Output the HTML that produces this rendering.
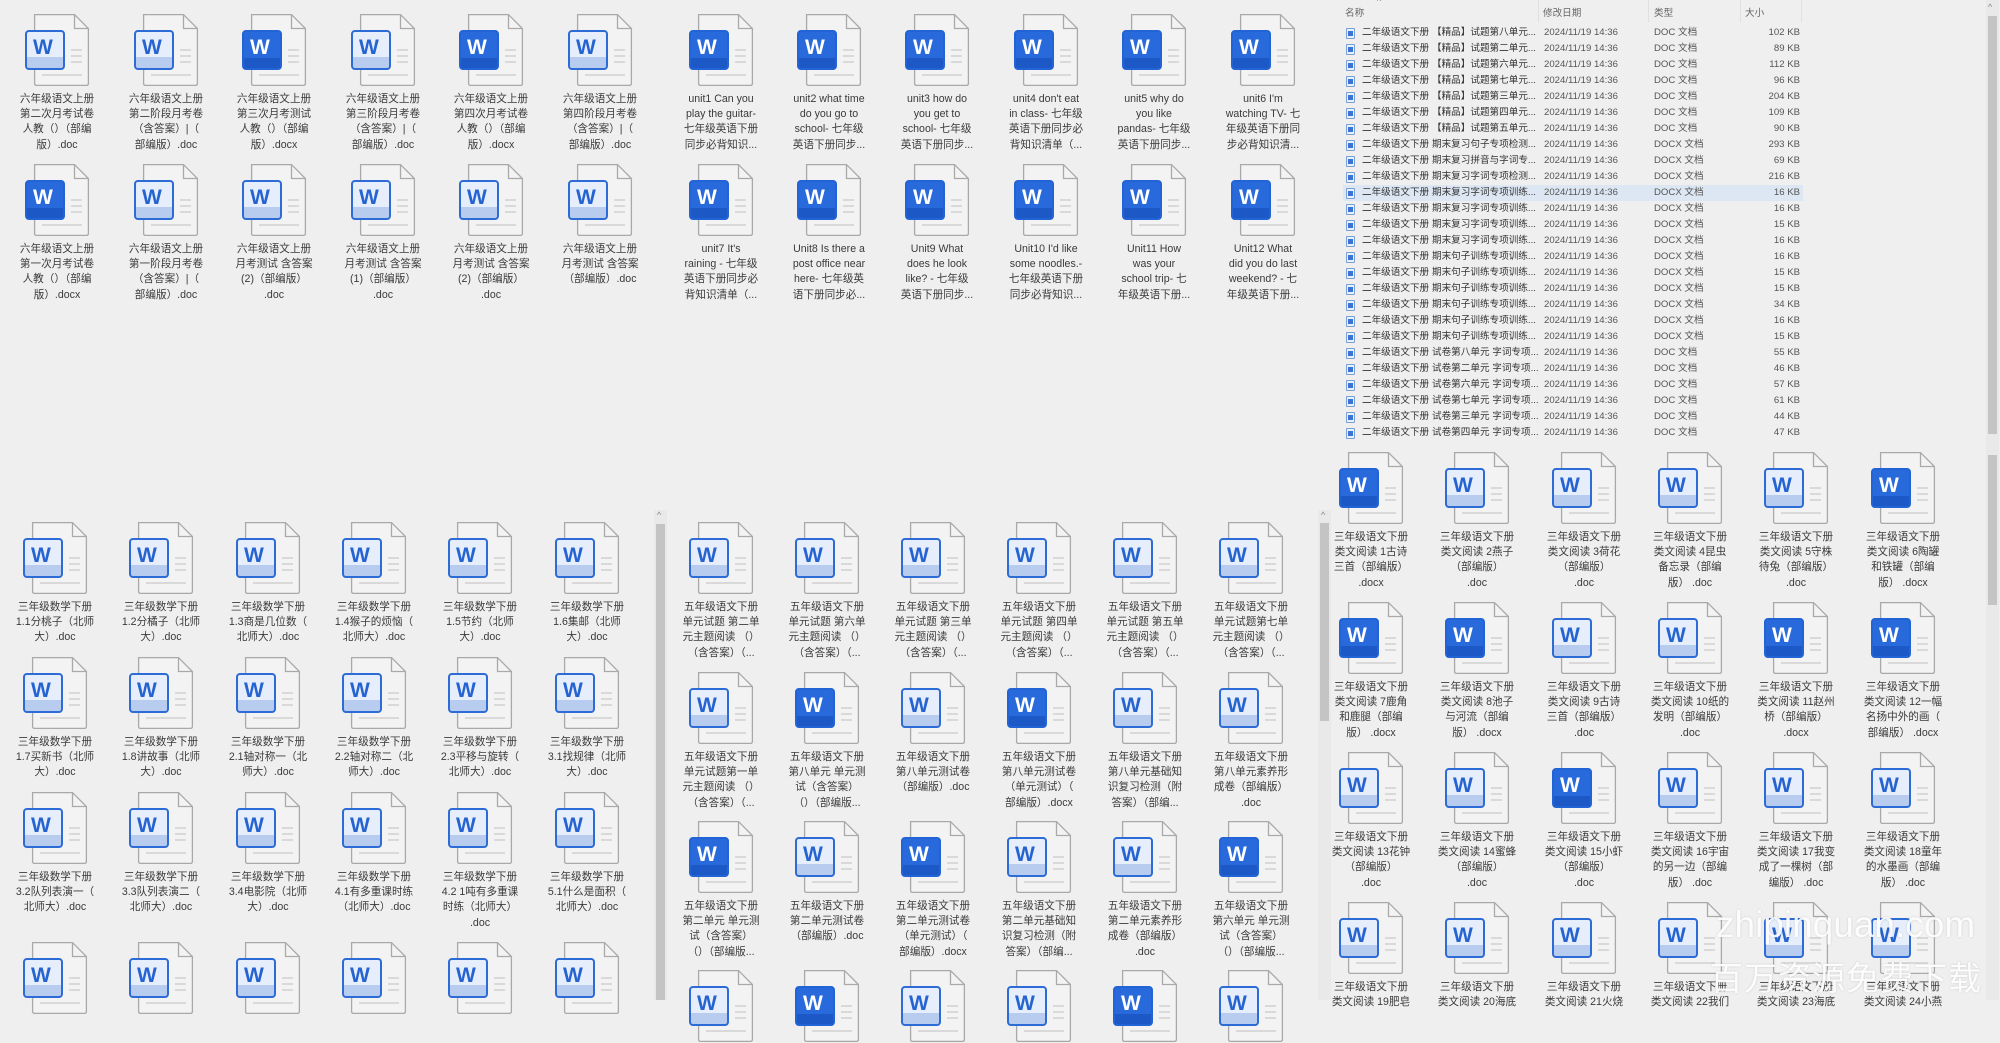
<!DOCTYPE html>
<html><head><meta charset="utf-8">
<style>
*{margin:0;padding:0;box-sizing:border-box}
body{width:2000px;height:1000px;overflow:hidden;background:#efefef;position:relative;font-family:"Liberation Sans","Noto Sans CJK SC",sans-serif;color:#3a3a3a}
.it{position:absolute;width:120px;margin-left:-60px;text-align:center}
.ic{position:relative;width:66px;height:74px;margin:0 auto}
.ic svg{position:absolute;left:0;top:0;width:66px;height:74px}
.ic b{position:absolute;left:1px;top:17px;width:40px;height:40px;border:2px solid #2d6bd6;border-radius:4px;background:linear-gradient(#e7eefb 0,#e7eefb 70%,#b8ccef 70%);color:#2563d1;font:bold 21px "Liberation Sans",sans-serif;text-align:left;padding:4px 0 0 6px;line-height:24px}
.ic.d b{background:linear-gradient(#2869dc 0,#2869dc 72%,#1d59c6 72%);border-color:#2263d6;color:#fff}
.it p{margin-top:5px;font-size:10.6px;line-height:15.2px;white-space:nowrap;color:#3a3a3a}
.row{position:absolute;left:1343px;width:460px;height:16px;font-size:9.6px;line-height:16px;color:#555;white-space:nowrap}
.row.sel{background:#dce7f3}
.row i{position:absolute;left:3px;top:3px;width:9px;height:11px;border:1px solid #7aa0d8;border-radius:1px;background:#e9f0fb}
.row i:after{content:"";position:absolute;left:1px;top:2px;width:5px;height:5px;background:#3b74d6}
.row span{position:absolute}
.row .n{left:19px;color:#333}
.row .n2{left:89px;color:#333}
.row .dt{left:201px}
.row .tp{left:311px}
.row .sz{right:3px;text-align:right}
.hd{position:absolute;top:3px;font-size:9.6px;color:#666}
.sb{position:absolute;background:#e9e9e9}
.th{position:absolute;background:#c4c4c4}
.ar{position:absolute;font-size:9px;color:#888}
.wm{position:absolute;color:rgba(255,255,255,0.92);text-shadow:0 0 2px rgba(0,0,0,0.15);white-space:nowrap}
</style></head><body>
<svg width="0" height="0" style="position:absolute"><symbol id="pg" viewBox="0 0 66 74"><path d="M10.6 1.6H50.5L64.4 15.5V70.4Q64.4 72.4 62.4 72.4H12.6Q10.6 72.4 10.6 70.4Z" fill="#f3f3f3" stroke="#a9a9a9" stroke-width="1.3"/><path d="M50.5 1.6V15.5H64.4" fill="none" stroke="#a9a9a9" stroke-width="1.3"/><path d="M47 37h11M47 43h11M47 49h11M18 62h40" stroke="#d9d9d9" stroke-width="2"/></symbol></svg>

<!-- TOP LEFT -->
<div class="it" style="left:57px;top:13px"><div class="ic"><svg><use href="#pg"/></svg><b>W</b></div><p>六年级语文上册<br>第二次月考试卷<br>人教（）（部编<br>版）.doc</p></div>
<div class="it" style="left:166px;top:13px"><div class="ic"><svg><use href="#pg"/></svg><b>W</b></div><p>六年级语文上册<br>第二阶段月考卷<br>（含答案）|（<br>部编版）.doc</p></div>
<div class="it" style="left:274px;top:13px"><div class="ic d"><svg><use href="#pg"/></svg><b>W</b></div><p>六年级语文上册<br>第三次月考测试<br>人教（）（部编<br>版）.docx</p></div>
<div class="it" style="left:383px;top:13px"><div class="ic"><svg><use href="#pg"/></svg><b>W</b></div><p>六年级语文上册<br>第三阶段月考卷<br>（含答案）|（<br>部编版）.doc</p></div>
<div class="it" style="left:491px;top:13px"><div class="ic d"><svg><use href="#pg"/></svg><b>W</b></div><p>六年级语文上册<br>第四次月考试卷<br>人教（）（部编<br>版）.docx</p></div>
<div class="it" style="left:600px;top:13px"><div class="ic"><svg><use href="#pg"/></svg><b>W</b></div><p>六年级语文上册<br>第四阶段月考卷<br>（含答案）|（<br>部编版）.doc</p></div>
<div class="it" style="left:57px;top:163px"><div class="ic d"><svg><use href="#pg"/></svg><b>W</b></div><p>六年级语文上册<br>第一次月考试卷<br>人教（）（部编<br>版）.docx</p></div>
<div class="it" style="left:166px;top:163px"><div class="ic"><svg><use href="#pg"/></svg><b>W</b></div><p>六年级语文上册<br>第一阶段月考卷<br>（含答案）|（<br>部编版）.doc</p></div>
<div class="it" style="left:274px;top:163px"><div class="ic"><svg><use href="#pg"/></svg><b>W</b></div><p>六年级语文上册<br>月考测试 含答案<br>(2)（部编版）<br>.doc</p></div>
<div class="it" style="left:383px;top:163px"><div class="ic"><svg><use href="#pg"/></svg><b>W</b></div><p>六年级语文上册<br>月考测试 含答案<br>(1)（部编版）<br>.doc</p></div>
<div class="it" style="left:491px;top:163px"><div class="ic"><svg><use href="#pg"/></svg><b>W</b></div><p>六年级语文上册<br>月考测试 含答案<br>(2)（部编版）<br>.doc</p></div>
<div class="it" style="left:600px;top:163px"><div class="ic"><svg><use href="#pg"/></svg><b>W</b></div><p>六年级语文上册<br>月考测试 含答案<br>（部编版）.doc</p></div>

<!-- TOP MIDDLE -->
<div class="it" style="left:721px;top:13px"><div class="ic d"><svg><use href="#pg"/></svg><b>W</b></div><p>unit1 Can you<br>play the guitar-<br>七年级英语下册<br>同步必背知识...</p></div>
<div class="it" style="left:829px;top:13px"><div class="ic d"><svg><use href="#pg"/></svg><b>W</b></div><p>unit2 what time<br>do you go to<br>school- 七年级<br>英语下册同步...</p></div>
<div class="it" style="left:937px;top:13px"><div class="ic d"><svg><use href="#pg"/></svg><b>W</b></div><p>unit3 how do<br>you get to<br>school- 七年级<br>英语下册同步...</p></div>
<div class="it" style="left:1046px;top:13px"><div class="ic d"><svg><use href="#pg"/></svg><b>W</b></div><p>unit4 don't eat<br>in class- 七年级<br>英语下册同步必<br>背知识清单（...</p></div>
<div class="it" style="left:1154px;top:13px"><div class="ic d"><svg><use href="#pg"/></svg><b>W</b></div><p>unit5 why do<br>you like<br>pandas- 七年级<br>英语下册同步...</p></div>
<div class="it" style="left:1263px;top:13px"><div class="ic d"><svg><use href="#pg"/></svg><b>W</b></div><p>unit6 I'm<br>watching TV- 七<br>年级英语下册同<br>步必背知识清...</p></div>
<div class="it" style="left:721px;top:163px"><div class="ic d"><svg><use href="#pg"/></svg><b>W</b></div><p>unit7 It's<br>raining - 七年级<br>英语下册同步必<br>背知识清单（...</p></div>
<div class="it" style="left:829px;top:163px"><div class="ic d"><svg><use href="#pg"/></svg><b>W</b></div><p>Unit8 Is there a<br>post office near<br>here- 七年级英<br>语下册同步必...</p></div>
<div class="it" style="left:937px;top:163px"><div class="ic d"><svg><use href="#pg"/></svg><b>W</b></div><p>Unit9 What<br>does he look<br>like? - 七年级<br>英语下册同步...</p></div>
<div class="it" style="left:1046px;top:163px"><div class="ic d"><svg><use href="#pg"/></svg><b>W</b></div><p>Unit10 I'd like<br>some noodles.-<br>七年级英语下册<br>同步必背知识...</p></div>
<div class="it" style="left:1154px;top:163px"><div class="ic d"><svg><use href="#pg"/></svg><b>W</b></div><p>Unit11 How<br>was your<br>school trip- 七<br>年级英语下册...</p></div>
<div class="it" style="left:1263px;top:163px"><div class="ic d"><svg><use href="#pg"/></svg><b>W</b></div><p>Unit12 What<br>did you do last<br>weekend? - 七<br>年级英语下册...</p></div>

<!-- TOP RIGHT LIST -->
<div class="ar" style="left:1377px;top:-4px">^</div>
<div class="hd" style="left:1345px;top:5px">名称</div>
<div class="hd" style="left:1543px;top:5px">修改日期</div>
<div class="hd" style="left:1654px;top:5px">类型</div>
<div class="hd" style="left:1745px;top:5px">大小</div>
<div style="position:absolute;left:1538px;top:0;width:1px;height:22px;background:#e0e0e0"></div>
<div style="position:absolute;left:1648px;top:0;width:1px;height:22px;background:#e0e0e0"></div>
<div style="position:absolute;left:1740px;top:0;width:1px;height:22px;background:#e0e0e0"></div>
<div style="position:absolute;left:1801px;top:0;width:1px;height:22px;background:#e0e0e0"></div>

<div class="row" style="top:25px"><i></i><span class="n">二年级语文下册</span><span class="n2">【精品】试题第八单元...</span><span class="dt">2024/11/19 14:36</span><span class="tp">DOC 文档</span><span class="sz">102 KB</span></div>
<div class="row" style="top:41px"><i></i><span class="n">二年级语文下册</span><span class="n2">【精品】试题第二单元...</span><span class="dt">2024/11/19 14:36</span><span class="tp">DOC 文档</span><span class="sz">89 KB</span></div>
<div class="row" style="top:57px"><i></i><span class="n">二年级语文下册</span><span class="n2">【精品】试题第六单元...</span><span class="dt">2024/11/19 14:36</span><span class="tp">DOC 文档</span><span class="sz">112 KB</span></div>
<div class="row" style="top:73px"><i></i><span class="n">二年级语文下册</span><span class="n2">【精品】试题第七单元...</span><span class="dt">2024/11/19 14:36</span><span class="tp">DOC 文档</span><span class="sz">96 KB</span></div>
<div class="row" style="top:89px"><i></i><span class="n">二年级语文下册</span><span class="n2">【精品】试题第三单元...</span><span class="dt">2024/11/19 14:36</span><span class="tp">DOC 文档</span><span class="sz">204 KB</span></div>
<div class="row" style="top:105px"><i></i><span class="n">二年级语文下册</span><span class="n2">【精品】试题第四单元...</span><span class="dt">2024/11/19 14:36</span><span class="tp">DOC 文档</span><span class="sz">109 KB</span></div>
<div class="row" style="top:121px"><i></i><span class="n">二年级语文下册</span><span class="n2">【精品】试题第五单元...</span><span class="dt">2024/11/19 14:36</span><span class="tp">DOC 文档</span><span class="sz">90 KB</span></div>
<div class="row" style="top:137px"><i></i><span class="n">二年级语文下册</span><span class="n2">期末复习句子专项检测...</span><span class="dt">2024/11/19 14:36</span><span class="tp">DOCX 文档</span><span class="sz">293 KB</span></div>
<div class="row" style="top:153px"><i></i><span class="n">二年级语文下册</span><span class="n2">期末复习拼音与字词专...</span><span class="dt">2024/11/19 14:36</span><span class="tp">DOCX 文档</span><span class="sz">69 KB</span></div>
<div class="row" style="top:169px"><i></i><span class="n">二年级语文下册</span><span class="n2">期末复习字词专项检测...</span><span class="dt">2024/11/19 14:36</span><span class="tp">DOCX 文档</span><span class="sz">216 KB</span></div>
<div class="row sel" style="top:185px"><i></i><span class="n">二年级语文下册</span><span class="n2">期末复习字词专项训练...</span><span class="dt">2024/11/19 14:36</span><span class="tp">DOCX 文档</span><span class="sz">16 KB</span></div>
<div class="row" style="top:201px"><i></i><span class="n">二年级语文下册</span><span class="n2">期末复习字词专项训练...</span><span class="dt">2024/11/19 14:36</span><span class="tp">DOCX 文档</span><span class="sz">16 KB</span></div>
<div class="row" style="top:217px"><i></i><span class="n">二年级语文下册</span><span class="n2">期末复习字词专项训练...</span><span class="dt">2024/11/19 14:36</span><span class="tp">DOCX 文档</span><span class="sz">15 KB</span></div>
<div class="row" style="top:233px"><i></i><span class="n">二年级语文下册</span><span class="n2">期末复习字词专项训练...</span><span class="dt">2024/11/19 14:36</span><span class="tp">DOCX 文档</span><span class="sz">16 KB</span></div>
<div class="row" style="top:249px"><i></i><span class="n">二年级语文下册</span><span class="n2">期末句子训练专项训练...</span><span class="dt">2024/11/19 14:36</span><span class="tp">DOCX 文档</span><span class="sz">16 KB</span></div>
<div class="row" style="top:265px"><i></i><span class="n">二年级语文下册</span><span class="n2">期末句子训练专项训练...</span><span class="dt">2024/11/19 14:36</span><span class="tp">DOCX 文档</span><span class="sz">15 KB</span></div>
<div class="row" style="top:281px"><i></i><span class="n">二年级语文下册</span><span class="n2">期末句子训练专项训练...</span><span class="dt">2024/11/19 14:36</span><span class="tp">DOCX 文档</span><span class="sz">15 KB</span></div>
<div class="row" style="top:297px"><i></i><span class="n">二年级语文下册</span><span class="n2">期末句子训练专项训练...</span><span class="dt">2024/11/19 14:36</span><span class="tp">DOCX 文档</span><span class="sz">34 KB</span></div>
<div class="row" style="top:313px"><i></i><span class="n">二年级语文下册</span><span class="n2">期末句子训练专项训练...</span><span class="dt">2024/11/19 14:36</span><span class="tp">DOCX 文档</span><span class="sz">16 KB</span></div>
<div class="row" style="top:329px"><i></i><span class="n">二年级语文下册</span><span class="n2">期末句子训练专项训练...</span><span class="dt">2024/11/19 14:36</span><span class="tp">DOCX 文档</span><span class="sz">15 KB</span></div>
<div class="row" style="top:345px"><i></i><span class="n">二年级语文下册</span><span class="n2">试卷第八单元 字词专项...</span><span class="dt">2024/11/19 14:36</span><span class="tp">DOC 文档</span><span class="sz">55 KB</span></div>
<div class="row" style="top:361px"><i></i><span class="n">二年级语文下册</span><span class="n2">试卷第二单元 字词专项...</span><span class="dt">2024/11/19 14:36</span><span class="tp">DOC 文档</span><span class="sz">46 KB</span></div>
<div class="row" style="top:377px"><i></i><span class="n">二年级语文下册</span><span class="n2">试卷第六单元 字词专项...</span><span class="dt">2024/11/19 14:36</span><span class="tp">DOC 文档</span><span class="sz">57 KB</span></div>
<div class="row" style="top:393px"><i></i><span class="n">二年级语文下册</span><span class="n2">试卷第七单元 字词专项...</span><span class="dt">2024/11/19 14:36</span><span class="tp">DOC 文档</span><span class="sz">61 KB</span></div>
<div class="row" style="top:409px"><i></i><span class="n">二年级语文下册</span><span class="n2">试卷第三单元 字词专项...</span><span class="dt">2024/11/19 14:36</span><span class="tp">DOC 文档</span><span class="sz">44 KB</span></div>
<div class="row" style="top:425px"><i></i><span class="n">二年级语文下册</span><span class="n2">试卷第四单元 字词专项...</span><span class="dt">2024/11/19 14:36</span><span class="tp">DOC 文档</span><span class="sz">47 KB</span></div>

<div class="sb" style="left:1986px;top:0;width:13px;height:445px"></div>
<div class="ar" style="left:1988px;top:2px">^</div>
<div class="th" style="left:1988px;top:16px;width:9px;height:418px"></div>

<!-- BOTTOM LEFT -->
<div class="it" style="left:55px;top:521px"><div class="ic"><svg><use href="#pg"/></svg><b>W</b></div><p>三年级数学下册<br>1.1分桃子（北师<br>大）.doc</p></div>
<div class="it" style="left:161px;top:521px"><div class="ic"><svg><use href="#pg"/></svg><b>W</b></div><p>三年级数学下册<br>1.2分橘子（北师<br>大）.doc</p></div>
<div class="it" style="left:268px;top:521px"><div class="ic"><svg><use href="#pg"/></svg><b>W</b></div><p>三年级数学下册<br>1.3商是几位数（<br>北师大）.doc</p></div>
<div class="it" style="left:374px;top:521px"><div class="ic"><svg><use href="#pg"/></svg><b>W</b></div><p>三年级数学下册<br>1.4猴子的烦恼（<br>北师大）.doc</p></div>
<div class="it" style="left:480px;top:521px"><div class="ic"><svg><use href="#pg"/></svg><b>W</b></div><p>三年级数学下册<br>1.5节约（北师<br>大）.doc</p></div>
<div class="it" style="left:587px;top:521px"><div class="ic"><svg><use href="#pg"/></svg><b>W</b></div><p>三年级数学下册<br>1.6集邮（北师<br>大）.doc</p></div>
<div class="it" style="left:55px;top:656px"><div class="ic"><svg><use href="#pg"/></svg><b>W</b></div><p>三年级数学下册<br>1.7买新书（北师<br>大）.doc</p></div>
<div class="it" style="left:161px;top:656px"><div class="ic"><svg><use href="#pg"/></svg><b>W</b></div><p>三年级数学下册<br>1.8讲故事（北师<br>大）.doc</p></div>
<div class="it" style="left:268px;top:656px"><div class="ic"><svg><use href="#pg"/></svg><b>W</b></div><p>三年级数学下册<br>2.1轴对称一（北<br>师大）.doc</p></div>
<div class="it" style="left:374px;top:656px"><div class="ic"><svg><use href="#pg"/></svg><b>W</b></div><p>三年级数学下册<br>2.2轴对称二（北<br>师大）.doc</p></div>
<div class="it" style="left:480px;top:656px"><div class="ic"><svg><use href="#pg"/></svg><b>W</b></div><p>三年级数学下册<br>2.3平移与旋转（<br>北师大）.doc</p></div>
<div class="it" style="left:587px;top:656px"><div class="ic"><svg><use href="#pg"/></svg><b>W</b></div><p>三年级数学下册<br>3.1找规律（北师<br>大）.doc</p></div>
<div class="it" style="left:55px;top:791px"><div class="ic"><svg><use href="#pg"/></svg><b>W</b></div><p>三年级数学下册<br>3.2队列表演一（<br>北师大）.doc</p></div>
<div class="it" style="left:161px;top:791px"><div class="ic"><svg><use href="#pg"/></svg><b>W</b></div><p>三年级数学下册<br>3.3队列表演二（<br>北师大）.doc</p></div>
<div class="it" style="left:268px;top:791px"><div class="ic"><svg><use href="#pg"/></svg><b>W</b></div><p>三年级数学下册<br>3.4电影院（北师<br>大）.doc</p></div>
<div class="it" style="left:374px;top:791px"><div class="ic"><svg><use href="#pg"/></svg><b>W</b></div><p>三年级数学下册<br>4.1有多重课时练<br>（北师大）.doc</p></div>
<div class="it" style="left:480px;top:791px"><div class="ic"><svg><use href="#pg"/></svg><b>W</b></div><p>三年级数学下册<br>4.2 1吨有多重课<br>时练（北师大）<br>.doc</p></div>
<div class="it" style="left:587px;top:791px"><div class="ic"><svg><use href="#pg"/></svg><b>W</b></div><p>三年级数学下册<br>5.1什么是面积（<br>北师大）.doc</p></div>
<div class="it" style="left:55px;top:941px"><div class="ic"><svg><use href="#pg"/></svg><b>W</b></div></div>
<div class="it" style="left:161px;top:941px"><div class="ic"><svg><use href="#pg"/></svg><b>W</b></div></div>
<div class="it" style="left:268px;top:941px"><div class="ic"><svg><use href="#pg"/></svg><b>W</b></div></div>
<div class="it" style="left:374px;top:941px"><div class="ic"><svg><use href="#pg"/></svg><b>W</b></div></div>
<div class="it" style="left:480px;top:941px"><div class="ic"><svg><use href="#pg"/></svg><b>W</b></div></div>
<div class="it" style="left:587px;top:941px"><div class="ic"><svg><use href="#pg"/></svg><b>W</b></div></div>
<div class="sb" style="left:654px;top:510px;width:13px;height:490px"></div>
<div class="ar" style="left:657px;top:510px">^</div>
<div class="th" style="left:656px;top:524px;width:9px;height:476px"></div>

<!-- BOTTOM MIDDLE -->
<div class="it" style="left:721px;top:521px"><div class="ic"><svg><use href="#pg"/></svg><b>W</b></div><p>五年级语文下册<br>单元试题 第二单<br>元主题阅读 （）<br>（含答案）（...</p></div>
<div class="it" style="left:827px;top:521px"><div class="ic"><svg><use href="#pg"/></svg><b>W</b></div><p>五年级语文下册<br>单元试题 第六单<br>元主题阅读 （）<br>（含答案）（...</p></div>
<div class="it" style="left:933px;top:521px"><div class="ic"><svg><use href="#pg"/></svg><b>W</b></div><p>五年级语文下册<br>单元试题 第三单<br>元主题阅读 （）<br>（含答案）（...</p></div>
<div class="it" style="left:1039px;top:521px"><div class="ic"><svg><use href="#pg"/></svg><b>W</b></div><p>五年级语文下册<br>单元试题 第四单<br>元主题阅读 （）<br>（含答案）（...</p></div>
<div class="it" style="left:1145px;top:521px"><div class="ic"><svg><use href="#pg"/></svg><b>W</b></div><p>五年级语文下册<br>单元试题 第五单<br>元主题阅读 （）<br>（含答案）（...</p></div>
<div class="it" style="left:1251px;top:521px"><div class="ic"><svg><use href="#pg"/></svg><b>W</b></div><p>五年级语文下册<br>单元试题第七单<br>元主题阅读 （）<br>（含答案）（...</p></div>
<div class="it" style="left:721px;top:671px"><div class="ic"><svg><use href="#pg"/></svg><b>W</b></div><p>五年级语文下册<br>单元试题第一单<br>元主题阅读 （）<br>（含答案）（...</p></div>
<div class="it" style="left:827px;top:671px"><div class="ic d"><svg><use href="#pg"/></svg><b>W</b></div><p>五年级语文下册<br>第八单元 单元测<br>试（含答案）<br>（）（部编版...</p></div>
<div class="it" style="left:933px;top:671px"><div class="ic"><svg><use href="#pg"/></svg><b>W</b></div><p>五年级语文下册<br>第八单元测试卷<br>（部编版）.doc</p></div>
<div class="it" style="left:1039px;top:671px"><div class="ic d"><svg><use href="#pg"/></svg><b>W</b></div><p>五年级语文下册<br>第八单元测试卷<br>（单元测试）（<br>部编版）.docx</p></div>
<div class="it" style="left:1145px;top:671px"><div class="ic"><svg><use href="#pg"/></svg><b>W</b></div><p>五年级语文下册<br>第八单元基础知<br>识复习检测（附<br>答案）（部编...</p></div>
<div class="it" style="left:1251px;top:671px"><div class="ic"><svg><use href="#pg"/></svg><b>W</b></div><p>五年级语文下册<br>第八单元素养形<br>成卷（部编版）<br>.doc</p></div>
<div class="it" style="left:721px;top:820px"><div class="ic d"><svg><use href="#pg"/></svg><b>W</b></div><p>五年级语文下册<br>第二单元 单元测<br>试（含答案）<br>（）（部编版...</p></div>
<div class="it" style="left:827px;top:820px"><div class="ic"><svg><use href="#pg"/></svg><b>W</b></div><p>五年级语文下册<br>第二单元测试卷<br>（部编版）.doc</p></div>
<div class="it" style="left:933px;top:820px"><div class="ic d"><svg><use href="#pg"/></svg><b>W</b></div><p>五年级语文下册<br>第二单元测试卷<br>（单元测试）（<br>部编版）.docx</p></div>
<div class="it" style="left:1039px;top:820px"><div class="ic"><svg><use href="#pg"/></svg><b>W</b></div><p>五年级语文下册<br>第二单元基础知<br>识复习检测（附<br>答案）（部编...</p></div>
<div class="it" style="left:1145px;top:820px"><div class="ic"><svg><use href="#pg"/></svg><b>W</b></div><p>五年级语文下册<br>第二单元素养形<br>成卷（部编版）<br>.doc</p></div>
<div class="it" style="left:1251px;top:820px"><div class="ic d"><svg><use href="#pg"/></svg><b>W</b></div><p>五年级语文下册<br>第六单元 单元测<br>试（含答案）<br>（）（部编版...</p></div>
<div class="it" style="left:721px;top:969px"><div class="ic"><svg><use href="#pg"/></svg><b>W</b></div></div>
<div class="it" style="left:827px;top:969px"><div class="ic d"><svg><use href="#pg"/></svg><b>W</b></div></div>
<div class="it" style="left:933px;top:969px"><div class="ic"><svg><use href="#pg"/></svg><b>W</b></div></div>
<div class="it" style="left:1039px;top:969px"><div class="ic"><svg><use href="#pg"/></svg><b>W</b></div></div>
<div class="it" style="left:1145px;top:969px"><div class="ic d"><svg><use href="#pg"/></svg><b>W</b></div></div>
<div class="it" style="left:1251px;top:969px"><div class="ic"><svg><use href="#pg"/></svg><b>W</b></div></div>
<div class="sb" style="left:1318px;top:510px;width:13px;height:490px"></div>
<div class="ar" style="left:1321px;top:510px">^</div>
<div class="th" style="left:1320px;top:523px;width:9px;height:198px"></div>

<!-- BOTTOM RIGHT -->
<div class="it" style="left:1371px;top:451px"><div class="ic d"><svg><use href="#pg"/></svg><b>W</b></div><p>三年级语文下册<br>类文阅读 1古诗<br>三首（部编版）<br>.docx</p></div>
<div class="it" style="left:1477px;top:451px"><div class="ic"><svg><use href="#pg"/></svg><b>W</b></div><p>三年级语文下册<br>类文阅读 2燕子<br>（部编版）<br>.doc</p></div>
<div class="it" style="left:1584px;top:451px"><div class="ic"><svg><use href="#pg"/></svg><b>W</b></div><p>三年级语文下册<br>类文阅读 3荷花<br>（部编版）<br>.doc</p></div>
<div class="it" style="left:1690px;top:451px"><div class="ic"><svg><use href="#pg"/></svg><b>W</b></div><p>三年级语文下册<br>类文阅读 4昆虫<br>备忘录（部编<br>版） .doc</p></div>
<div class="it" style="left:1796px;top:451px"><div class="ic"><svg><use href="#pg"/></svg><b>W</b></div><p>三年级语文下册<br>类文阅读 5守株<br>待兔（部编版）<br>.doc</p></div>
<div class="it" style="left:1903px;top:451px"><div class="ic d"><svg><use href="#pg"/></svg><b>W</b></div><p>三年级语文下册<br>类文阅读 6陶罐<br>和铁罐（部编<br>版） .docx</p></div>
<div class="it" style="left:1371px;top:601px"><div class="ic d"><svg><use href="#pg"/></svg><b>W</b></div><p>三年级语文下册<br>类文阅读 7鹿角<br>和鹿腿（部编<br>版） .docx</p></div>
<div class="it" style="left:1477px;top:601px"><div class="ic d"><svg><use href="#pg"/></svg><b>W</b></div><p>三年级语文下册<br>类文阅读 8池子<br>与河流（部编<br>版） .docx</p></div>
<div class="it" style="left:1584px;top:601px"><div class="ic"><svg><use href="#pg"/></svg><b>W</b></div><p>三年级语文下册<br>类文阅读 9古诗<br>三首（部编版）<br>.doc</p></div>
<div class="it" style="left:1690px;top:601px"><div class="ic"><svg><use href="#pg"/></svg><b>W</b></div><p>三年级语文下册<br>类文阅读 10纸的<br>发明（部编版）<br>.doc</p></div>
<div class="it" style="left:1796px;top:601px"><div class="ic d"><svg><use href="#pg"/></svg><b>W</b></div><p>三年级语文下册<br>类文阅读 11赵州<br>桥（部编版）<br>.docx</p></div>
<div class="it" style="left:1903px;top:601px"><div class="ic d"><svg><use href="#pg"/></svg><b>W</b></div><p>三年级语文下册<br>类文阅读 12一幅<br>名扬中外的画（<br>部编版） .docx</p></div>
<div class="it" style="left:1371px;top:751px"><div class="ic"><svg><use href="#pg"/></svg><b>W</b></div><p>三年级语文下册<br>类文阅读 13花钟<br>（部编版）<br>.doc</p></div>
<div class="it" style="left:1477px;top:751px"><div class="ic"><svg><use href="#pg"/></svg><b>W</b></div><p>三年级语文下册<br>类文阅读 14蜜蜂<br>（部编版）<br>.doc</p></div>
<div class="it" style="left:1584px;top:751px"><div class="ic d"><svg><use href="#pg"/></svg><b>W</b></div><p>三年级语文下册<br>类文阅读 15小虾<br>（部编版）<br>.doc</p></div>
<div class="it" style="left:1690px;top:751px"><div class="ic"><svg><use href="#pg"/></svg><b>W</b></div><p>三年级语文下册<br>类文阅读 16宇宙<br>的另一边（部编<br>版） .doc</p></div>
<div class="it" style="left:1796px;top:751px"><div class="ic"><svg><use href="#pg"/></svg><b>W</b></div><p>三年级语文下册<br>类文阅读 17我变<br>成了一棵树（部<br>编版） .doc</p></div>
<div class="it" style="left:1903px;top:751px"><div class="ic"><svg><use href="#pg"/></svg><b>W</b></div><p>三年级语文下册<br>类文阅读 18童年<br>的水墨画（部编<br>版） .doc</p></div>
<div class="it" style="left:1371px;top:901px"><div class="ic"><svg><use href="#pg"/></svg><b>W</b></div><p>三年级语文下册<br>类文阅读 19肥皂</p></div>
<div class="it" style="left:1477px;top:901px"><div class="ic"><svg><use href="#pg"/></svg><b>W</b></div><p>三年级语文下册<br>类文阅读 20海底</p></div>
<div class="it" style="left:1584px;top:901px"><div class="ic"><svg><use href="#pg"/></svg><b>W</b></div><p>三年级语文下册<br>类文阅读 21火烧</p></div>
<div class="it" style="left:1690px;top:901px"><div class="ic"><svg><use href="#pg"/></svg><b>W</b></div><p>三年级语文下册<br>类文阅读 22我们</p></div>
<div class="it" style="left:1796px;top:901px"><div class="ic"><svg><use href="#pg"/></svg><b>W</b></div><p>三年级语文下册<br>类文阅读 23海底</p></div>
<div class="it" style="left:1903px;top:901px"><div class="ic"><svg><use href="#pg"/></svg><b>W</b></div><p>三年级语文下册<br>类文阅读 24小燕</p></div>
<div class="sb" style="left:1986px;top:445px;width:13px;height:555px"></div>
<div class="th" style="left:1988px;top:455px;width:9px;height:150px"></div>

<!-- WATERMARK -->
<div class="wm" style="left:1716px;top:904px;font:37px 'Liberation Sans',sans-serif">zhipinquan.com</div>
<div class="wm" style="left:1710px;top:952px;font:33px 'Noto Sans CJK SC',sans-serif;letter-spacing:1px">百万资源免费下载</div>
</body></html>
